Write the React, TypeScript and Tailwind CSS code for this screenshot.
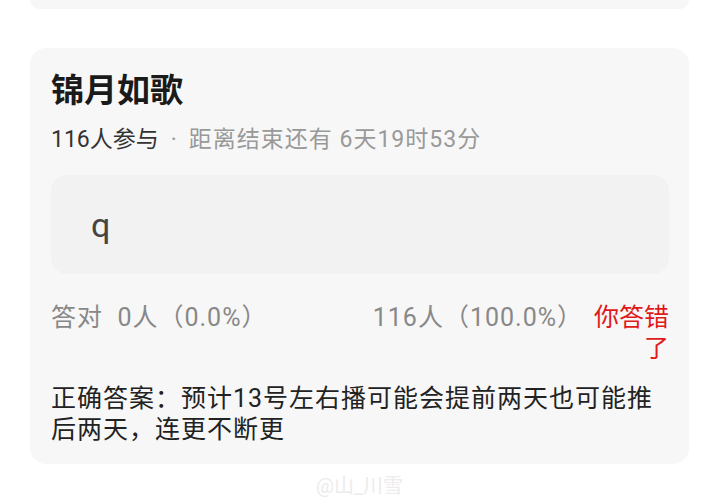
export default function App() {
  return (
    <div
      className="min-h-[499px] w-[719px] bg-white px-[30px]"
      style={{ fontFamily: 'Roboto, "Noto Sans CJK SC", sans-serif' }}
    >
      {/* tail of the card above */}
      <div className="h-[9px] rounded-b-[9px] bg-[#f7f7f7]" />

      {/* Quiz card */}
      <div className="mt-[39px] rounded-[16px] bg-[#f7f7f7] pl-[21px] pr-[20px] pt-[21px] pb-[19px]">
        <h1 className="text-[33px] font-bold leading-[44px] text-[#1a1a1a]">锦月如歌</h1>

        <p className="mt-[11px] text-[23px] leading-[32px] text-[#999]">
          <span className="text-[#333]">116人参与</span>
          <span className="mx-[12px]">·</span>
          <span className="tracking-[1px]">距离结束还有 6天19时53分</span>
        </p>

        <div className="mt-[19px] flex h-[99px] items-center rounded-[16px] bg-[#f2f2f2] pl-[40px]">
          <span className="text-[34px] leading-none text-[#444]">q</span>
        </div>

        <div className="mt-[28px] flex items-start text-[25px] leading-[31px] text-[#888]">
          <span className="flex-1 tracking-[1px]">答对&nbsp;&nbsp;0人（0.0%）</span>
          <span className="tracking-[1px]">116人（100.0%）</span>
          <span className="ml-[8px] w-[78px] text-right text-[#e01a1a]">你答错了</span>
        </div>

        <p className="mt-[19px] text-[25px] leading-[31px] tracking-[1px] text-[#222]">
          正确答案：预计13号左右播可能会提前两天也可能推后两天，连更不断更
        </p>
      </div>

      {/* watermark */}
      <div className="flex justify-center pt-[10px]">
        <span className="text-[20px] leading-[24px] text-[#ececec]">@山_川雪</span>
      </div>
    </div>
  );
}
